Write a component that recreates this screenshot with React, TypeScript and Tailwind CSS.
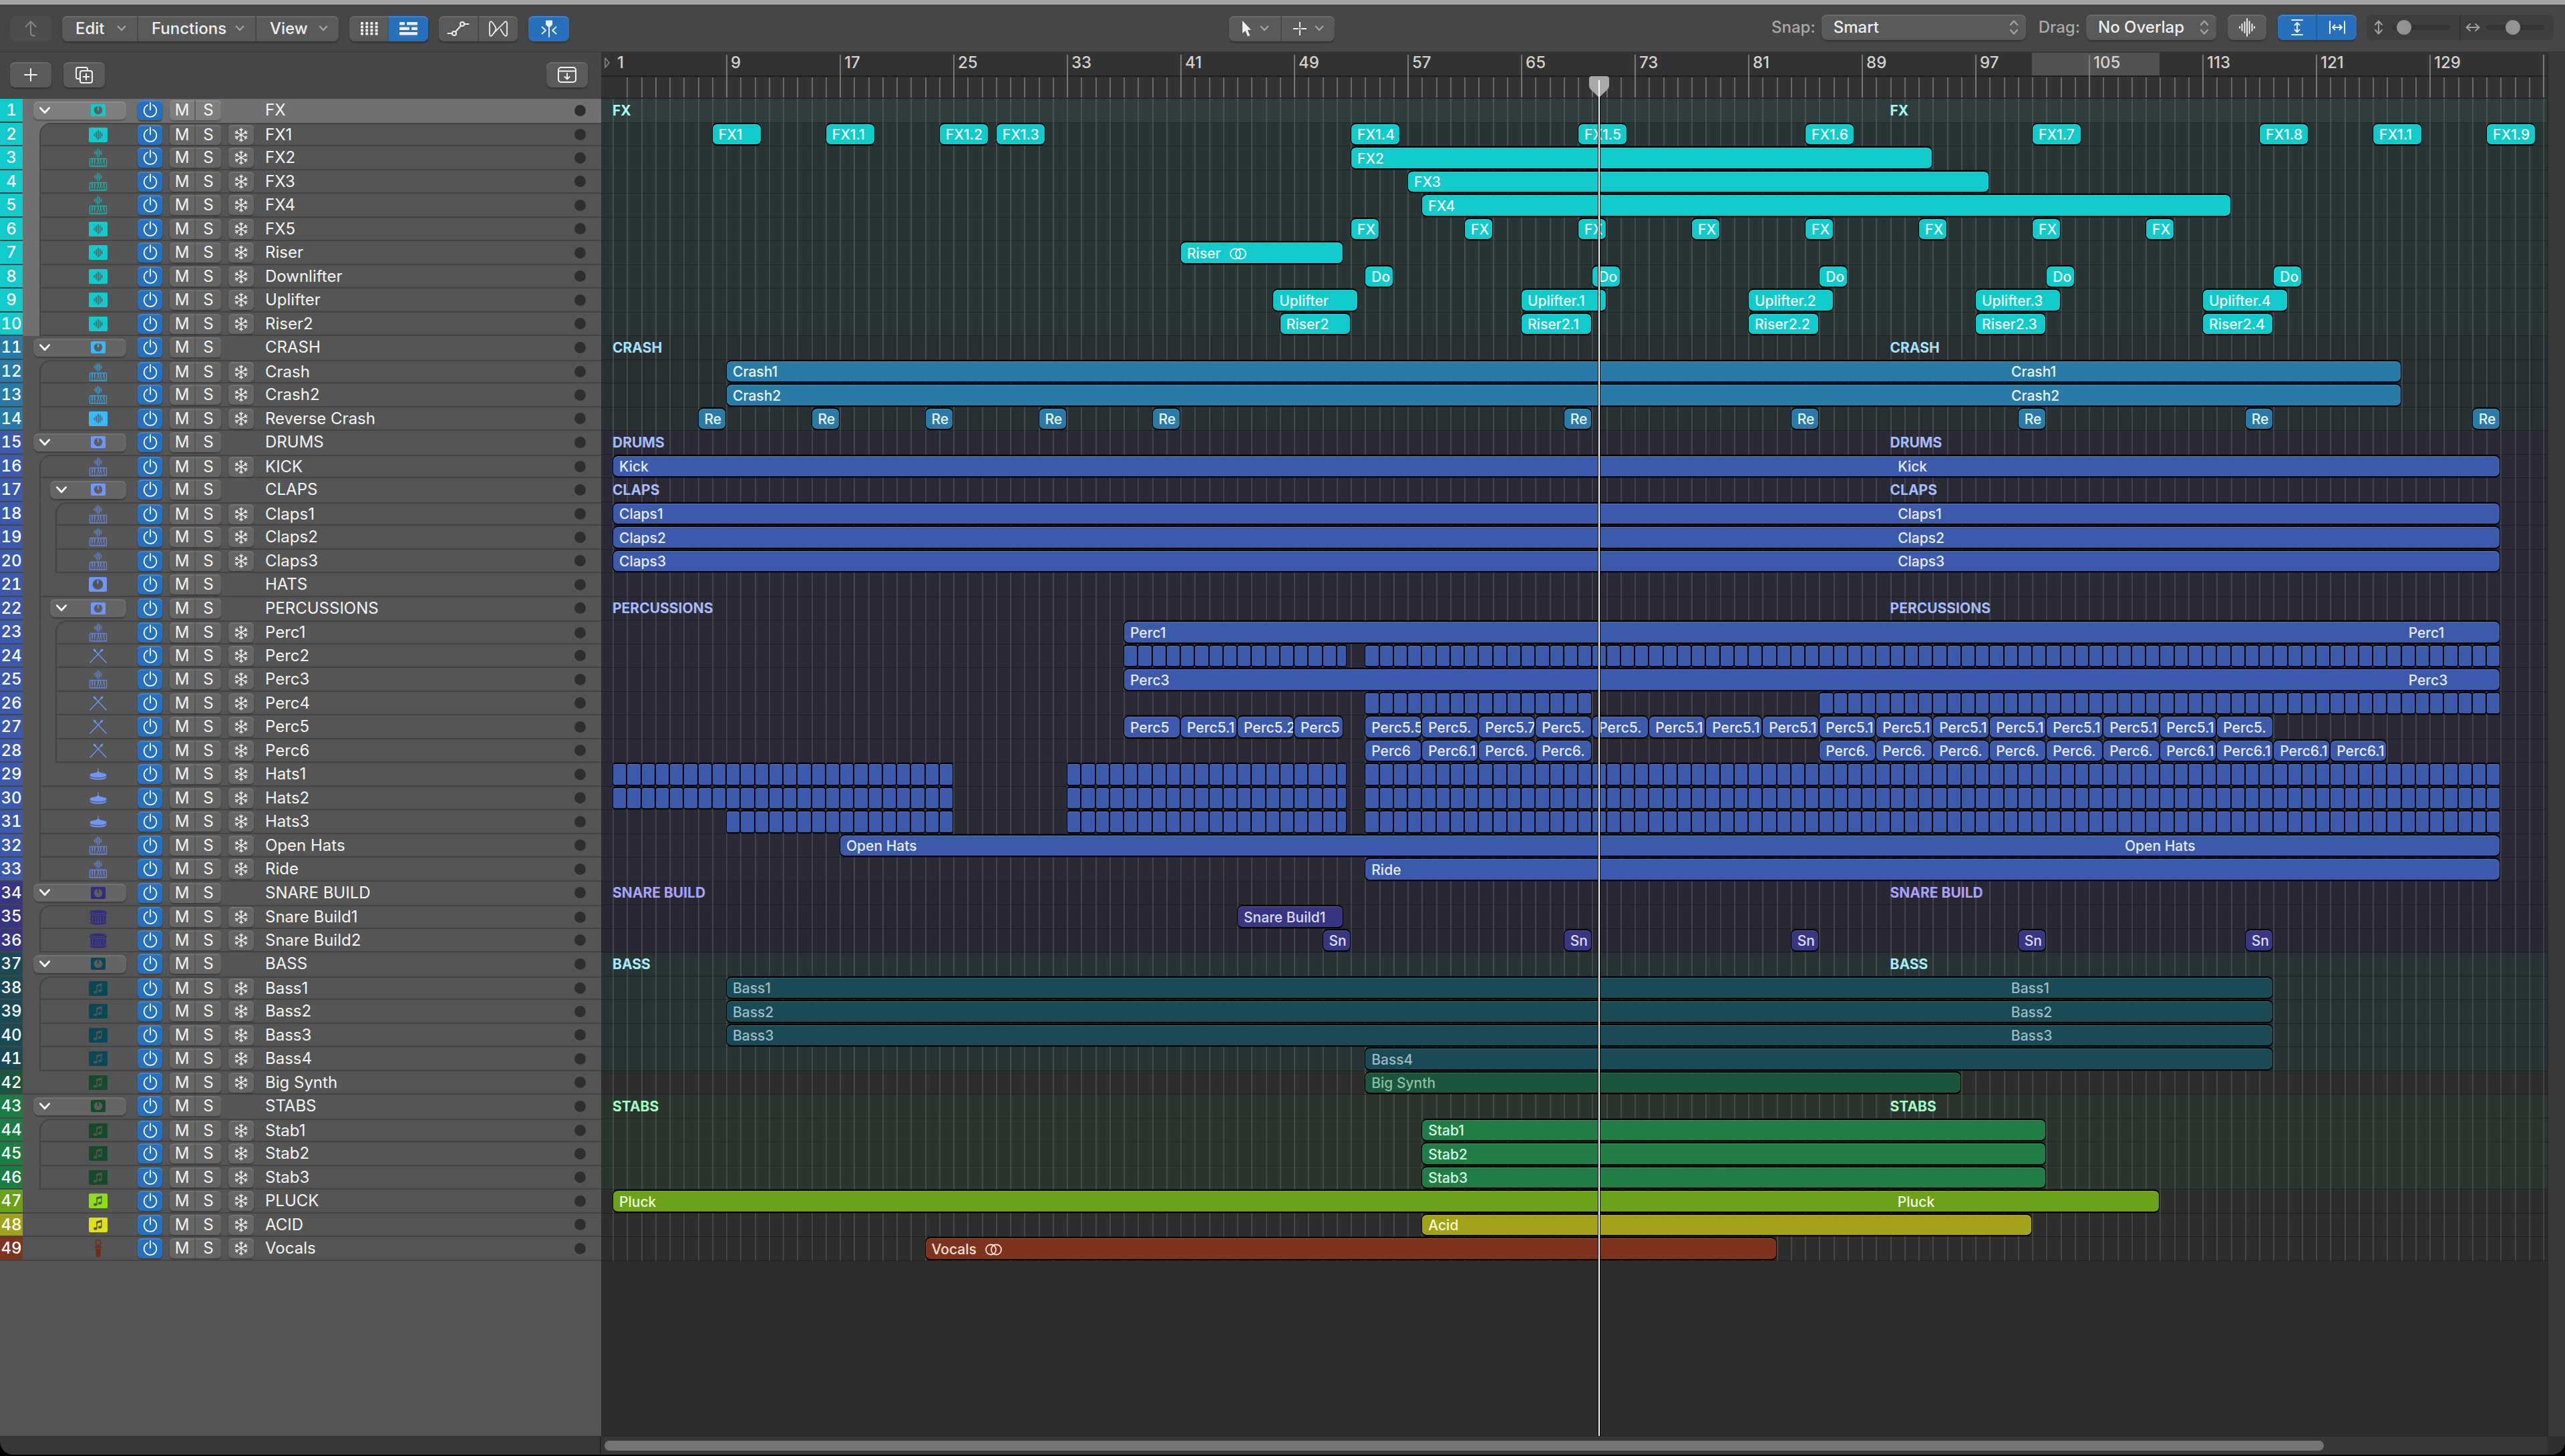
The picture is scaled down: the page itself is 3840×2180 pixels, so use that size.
import React from 'react';
import clsx from 'clsx';

type IconKind = 'folder' | 'audio' | 'sampler' | 'sticks' | 'cymbal' | 'snare' | 'note' | 'mic' | 'stack';

interface Region {
  from: number;
  to: number;
  label?: string;
  stereo?: boolean;
}

interface Group {
  number: string;
  region: string;
  text: string;
  title: string;
  icon: string;
  lane: string;
}

interface Track {
  name: string;
  icon: IconKind;
  group: keyof typeof groups;
  depth?: number;
  first?: boolean;
  regions?: Region[];
}

// Number of bars that fit between bar 1 and the right edge of the timeline
const VISIBLE_BARS = 136.28;
// Long regions and folders show their name again after this many bars
const LABEL_REPEAT = 90;

const groups = {
  fx: { number: 'bg-[#10cacb]', region: 'bg-[#10cacb]', text: 'text-[#f0ffff]', title: 'text-[#a0fdf7]', icon: 'text-[#10cacb]', lane: 'bg-[#293535]' },
  crash: { number: 'bg-[#287ba6]', region: 'bg-[#287ba6]', text: 'text-[#eef8ff]', title: 'text-[#a2e2ff]', icon: 'text-[#38baff]', lane: 'bg-[#293034]' },
  drums: { number: 'bg-[#3c5aac]', region: 'bg-[#3c5aac]', text: 'text-[#e6edff]', title: 'text-[#a5bbff]', icon: 'text-[#6f95ff]', lane: 'bg-[#292a35]' },
  snare: { number: 'bg-[#383583]', region: 'bg-[#383583]', text: 'text-[#dddcff]', title: 'text-[#a9a3ff]', icon: 'text-[#302d80]', lane: 'bg-[#292733]' },
  bass: { number: 'bg-[#1b4a57]', region: 'bg-[#1b4a57]', text: 'text-[#9dbbc6]', title: 'text-[#a4edfa]', icon: 'text-[#064758]', lane: 'bg-[#283336]' },
  synth: { number: 'bg-[#1b563c]', region: 'bg-[#1b563c]', text: 'text-[#8fbfa5]', title: 'text-[#9effc8]', icon: 'text-[#144a2e]', lane: 'bg-[#2d2d2d]' },
  stabs: { number: 'bg-[#1b7d42]', region: 'bg-[#1f7d45]', text: 'text-[#d5ffe5]', title: 'text-[#a0ffc4]', icon: 'text-[#144a28]', lane: 'bg-[#29352d]' },
  pluck: { number: 'bg-[#6ba218]', region: 'bg-[#6ba218]', text: 'text-[#f2ffe0]', title: 'text-white', icon: 'text-[#8ce012]', lane: 'bg-[#2d2d2d]' },
  acid: { number: 'bg-[#a2a118]', region: 'bg-[#a2a118]', text: 'text-[#ffffdd]', title: 'text-white', icon: 'text-[#e2e212]', lane: 'bg-[#2d2d2d]' },
  vocals: { number: 'bg-[#80331c]', region: 'bg-[#80331c]', text: 'text-[#ffe3d8]', title: 'text-white', icon: 'text-[#752a18]', lane: 'bg-[#2d2d2d]' },
} satisfies Record<string, Group>;

const long = (from: number, to: number, label: string): Region[] => [{ from, to, label }];

const series = (length: number, items: [number, string][]): Region[] =>
  items.map(([from, label]) => ({ from, to: from + length, label }));

// One region per bar, the last one is cut off when `to` is not a whole bar
const cells = (from: number, to: number): Region[] => {
  const out: Region[] = [];
  for (let bar = from; bar < to; bar++) out.push({ from: bar, to: Math.min(bar + 1, to) });
  return out;
};

const chain = (from: number, labels: string[]): Region[] =>
  labels.map((label, i) => ({ from: from + i * 4, to: from + i * 4 + 4, label }));

const hats = [...cells(1, 25), ...cells(33, 52.7), ...cells(54, 134)];

const tracks: Track[] = [
  { name: 'FX', icon: 'folder', group: 'fx' },
  {
    name: 'FX1', icon: 'audio', group: 'fx', depth: 1, first: true,
    regions: series(3.5, [[8, 'FX1'], [16, 'FX1.1'], [24, 'FX1.2'], [28, 'FX1.3'], [53, 'FX1.4'], [69, 'FX1.5'], [85, 'FX1.6'], [101, 'FX1.7'], [117, 'FX1.8'], [125, 'FX1.1'], [133, 'FX1.9']]),
  },
  { name: 'FX2', icon: 'sampler', group: 'fx', depth: 1, regions: long(53, 94, 'FX2') },
  { name: 'FX3', icon: 'sampler', group: 'fx', depth: 1, regions: long(57, 98, 'FX3') },
  { name: 'FX4', icon: 'sampler', group: 'fx', depth: 1, regions: long(58, 115, 'FX4') },
  { name: 'FX5', icon: 'audio', group: 'fx', depth: 1, regions: series(2, [[53, 'FX'], [61, 'FX'], [69, 'FX'], [77, 'FX'], [85, 'FX'], [93, 'FX'], [101, 'FX'], [109, 'FX']]) },
  { name: 'Riser', icon: 'audio', group: 'fx', depth: 1, regions: [{ from: 41, to: 52.5, label: 'Riser', stereo: true }] },
  { name: 'Downlifter', icon: 'audio', group: 'fx', depth: 1, regions: series(2, [[54, 'Do'], [70, 'Do'], [86, 'Do'], [102, 'Do'], [118, 'Do']]) },
  { name: 'Uplifter', icon: 'audio', group: 'fx', depth: 1, regions: series(6, [[47.5, 'Uplifter'], [65, 'Uplifter.1'], [81, 'Uplifter.2'], [97, 'Uplifter.3'], [113, 'Uplifter.4']]) },
  { name: 'Riser2', icon: 'audio', group: 'fx', depth: 1, regions: series(5, [[48, 'Riser2'], [65, 'Riser2.1'], [81, 'Riser2.2'], [97, 'Riser2.3'], [113, 'Riser2.4']]) },
  { name: 'CRASH', icon: 'folder', group: 'crash' },
  { name: 'Crash', icon: 'sampler', group: 'crash', depth: 1, first: true, regions: long(9, 127, 'Crash1') },
  { name: 'Crash2', icon: 'sampler', group: 'crash', depth: 1, regions: long(9, 127, 'Crash2') },
  { name: 'Reverse Crash', icon: 'audio', group: 'crash', depth: 1, regions: series(2, [[7, 'Re'], [15, 'Re'], [23, 'Re'], [31, 'Re'], [39, 'Re'], [68, 'Re'], [84, 'Re'], [100, 'Re'], [116, 'Re'], [132, 'Re']]) },
  { name: 'DRUMS', icon: 'folder', group: 'drums' },
  { name: 'KICK', icon: 'sampler', group: 'drums', depth: 1, first: true, regions: long(1, 134, 'Kick') },
  { name: 'CLAPS', icon: 'folder', group: 'drums', depth: 1 },
  { name: 'Claps1', icon: 'sampler', group: 'drums', depth: 2, first: true, regions: long(1, 134, 'Claps1') },
  { name: 'Claps2', icon: 'sampler', group: 'drums', depth: 2, regions: long(1, 134, 'Claps2') },
  { name: 'Claps3', icon: 'sampler', group: 'drums', depth: 2, regions: long(1, 134, 'Claps3') },
  { name: 'HATS', icon: 'stack', group: 'drums', depth: 1 },
  { name: 'PERCUSSIONS', icon: 'folder', group: 'drums', depth: 1 },
  { name: 'Perc1', icon: 'sampler', group: 'drums', depth: 2, first: true, regions: long(37, 134, 'Perc1') },
  { name: 'Perc2', icon: 'sticks', group: 'drums', depth: 2, regions: [...cells(37, 52.7), ...cells(54, 134)] },
  { name: 'Perc3', icon: 'sampler', group: 'drums', depth: 2, regions: long(37, 134, 'Perc3') },
  { name: 'Perc4', icon: 'sticks', group: 'drums', depth: 2, regions: [...cells(54, 70), ...cells(86, 134)] },
  {
    name: 'Perc5', icon: 'sticks', group: 'drums', depth: 2,
    regions: [
      ...chain(37, ['Perc5', 'Perc5.1', 'Perc5.2']),
      { from: 49, to: 52.5, label: 'Perc5' },
      ...chain(54, ['Perc5.5', 'Perc5.', 'Perc5.7', 'Perc5.', 'Perc5.', 'Perc5.1', 'Perc5.1', 'Perc5.1', 'Perc5.1', 'Perc5.1', 'Perc5.1', 'Perc5.1', 'Perc5.1', 'Perc5.1', 'Perc5.1', 'Perc5.']),
    ],
  },
  {
    name: 'Perc6', icon: 'sticks', group: 'drums', depth: 2,
    regions: [
      ...chain(54, ['Perc6', 'Perc6.1', 'Perc6.', 'Perc6.']),
      ...chain(86, ['Perc6.', 'Perc6.', 'Perc6.', 'Perc6.', 'Perc6.', 'Perc6.', 'Perc6.1', 'Perc6.1', 'Perc6.1', 'Perc6.1']),
    ],
  },
  { name: 'Hats1', icon: 'cymbal', group: 'drums', depth: 1, regions: hats },
  { name: 'Hats2', icon: 'cymbal', group: 'drums', depth: 1, regions: hats },
  { name: 'Hats3', icon: 'cymbal', group: 'drums', depth: 1, regions: hats.filter((r) => r.from >= 9) },
  { name: 'Open Hats', icon: 'sampler', group: 'drums', depth: 1, regions: long(17, 134, 'Open Hats') },
  { name: 'Ride', icon: 'sampler', group: 'drums', depth: 1, regions: long(54, 134, 'Ride') },
  { name: 'SNARE BUILD', icon: 'folder', group: 'snare' },
  { name: 'Snare Build1', icon: 'snare', group: 'snare', depth: 1, first: true, regions: long(45, 52.5, 'Snare Build1') },
  { name: 'Snare Build2', icon: 'snare', group: 'snare', depth: 1, regions: series(2, [[51, 'Sn'], [68, 'Sn'], [84, 'Sn'], [100, 'Sn'], [116, 'Sn']]) },
  { name: 'BASS', icon: 'folder', group: 'bass' },
  { name: 'Bass1', icon: 'note', group: 'bass', depth: 1, first: true, regions: long(9, 118, 'Bass1') },
  { name: 'Bass2', icon: 'note', group: 'bass', depth: 1, regions: long(9, 118, 'Bass2') },
  { name: 'Bass3', icon: 'note', group: 'bass', depth: 1, regions: long(9, 118, 'Bass3') },
  { name: 'Bass4', icon: 'note', group: 'bass', depth: 1, regions: long(54, 118, 'Bass4') },
  { name: 'Big Synth', icon: 'note', group: 'synth', regions: long(54, 96, 'Big Synth') },
  { name: 'STABS', icon: 'folder', group: 'stabs' },
  { name: 'Stab1', icon: 'note', group: 'stabs', depth: 1, first: true, regions: long(58, 102, 'Stab1') },
  { name: 'Stab2', icon: 'note', group: 'stabs', depth: 1, regions: long(58, 102, 'Stab2') },
  { name: 'Stab3', icon: 'note', group: 'stabs', depth: 1, regions: long(58, 102, 'Stab3') },
  { name: 'PLUCK', icon: 'note', group: 'pluck', regions: long(1, 110, 'Pluck') },
  { name: 'ACID', icon: 'note', group: 'acid', regions: long(58, 101, 'Acid') },
  { name: 'Vocals', icon: 'mic', group: 'vocals', regions: [{ from: 23, to: 83, label: 'Vocals', stereo: true }] },
];

const percent = (bars: number) => `${(bars / VISIBLE_BARS) * 100}%`;

const face = 'bg-[#5a5a5a] shadow-[inset_0_2px_0_#6b6b6b,0_2px_2px_#333333]';
const blueFace = 'bg-[#2670bd] shadow-[inset_0_2px_0_#4285c9,0_2px_2px_#333333]';

/* ---------- icons ---------- */

function Chevron({ className }: { className?: string }) {
  return (
    <svg className={clsx('shrink-0', className)} viewBox="0 0 16 10" fill="none" stroke="currentColor" strokeWidth="2.6" strokeLinecap="round" strokeLinejoin="round">
      <path d="M2 1.5 8 8 14 1.5" />
    </svg>
  );
}

function UpDown() {
  return (
    <svg className="w-4 h-6" viewBox="0 0 16 24" fill="none" stroke="currentColor" strokeWidth="2.4" strokeLinecap="round" strokeLinejoin="round">
      <path d="M3 8 8 2.5 13 8M3 16 8 21.5 13 16" />
    </svg>
  );
}

function PowerIcon() {
  return (
    <svg className="w-6 h-6" viewBox="0 0 24 24" fill="none" stroke="white" strokeWidth="1.8" strokeLinecap="round">
      <path d="M8 4.2a9.3 9.3 0 1 0 8 0M12 1v10.5" />
    </svg>
  );
}

function FreezeIcon() {
  return (
    <svg className="w-[22px] h-[22px]" viewBox="-11 -11 22 22" fill="none" stroke="white" strokeWidth="1.3" strokeLinecap="round">
      {[0, 60, 120, 180, 240, 300].map((angle) => (
        <path key={angle} transform={`rotate(${angle})`} d="M0 0V-10M-2.4 -8.6 0 -6.4 2.4 -8.6" />
      ))}
    </svg>
  );
}

function StereoIcon() {
  return (
    <svg className="w-7 h-[18px] shrink-0" viewBox="0 0 28 18" fill="none" stroke="currentColor" strokeWidth="1.8">
      <circle cx="9.5" cy="9" r="7.5" />
      <circle cx="17.5" cy="9" r="7.5" />
    </svg>
  );
}

function FolderIcon({ className }: { className?: string }) {
  return (
    <svg className={className} viewBox="0 0 22 18">
      <rect width="22" height="18" rx="2" fill="currentColor" />
      <circle cx="11" cy="9" r="6.3" fill="#5d5d5d" />
      <path d="M11 4v4.5" stroke="currentColor" strokeWidth="1.8" strokeLinecap="round" />
    </svg>
  );
}

function TrackIcon({ kind }: { kind: IconKind }) {
  return (
    <svg className="w-7 h-7" viewBox="0 0 28 28" fill="none" stroke="currentColor">
      {kind === 'audio' && (
        <>
          <rect y="3" width="28" height="22" rx="2" fill="currentColor" stroke="none" />
          <path d="M8.5 12.5v3M11.2 10v8M14 7.5v13M16.8 9v10M19.5 12v4" stroke="#555" strokeWidth="1.5" strokeLinecap="round" />
        </>
      )}
      {kind === 'stack' && (
        <>
          <rect y="3" width="27" height="22" rx="2" fill="currentColor" stroke="none" />
          <circle cx="13.5" cy="14" r="7.8" fill="#555" stroke="none" />
          <path d="M13.5 7.5v5.5" strokeWidth="2" />
        </>
      )}
      {kind === 'note' && (
        <>
          <rect y="3" width="28" height="22" rx="2" fill="currentColor" stroke="none" />
          <g stroke="#555" strokeWidth="1.4" fill="#555">
            <ellipse cx="9.8" cy="19.5" rx="2" ry="1.4" />
            <ellipse cx="16.6" cy="17.5" rx="2" ry="1.4" />
            <path d="M12 19.5V9.5M18.8 17.5V7.5" fill="none" />
            <path d="M12 11 18.8 9V7.3L12 9.3Z" />
          </g>
        </>
      )}
      {kind === 'sampler' && (
        <g opacity="0.75">
          <path d="M8.5 5.5v2.5M11 3.5v7M13.5 1v12M16 2.5v9M18.5 5v4" strokeWidth="1.4" strokeLinecap="round" />
          <rect x="1.5" y="15.5" width="25" height="11.5" rx="1" strokeWidth="1.4" />
          <path d="M5 22v5M8.7 22v5M12.3 22v5M16 22v5M19.7 22v5M23.3 22v5" strokeWidth="1" />
          <path d="M5 16v6.500M8.700 16v6.500M14 16v6.500M17.700 16v6.500M22.500 16v6.500" strokeWidth="1.8" />
        </g>
      )}
      {kind === 'sticks' && (
        <g strokeLinecap="round">
          <path d="M8 5 26 24M20 5 2 24" strokeWidth="1.4" />
          <path d="M8 5 9.500 6.500M20 5 18.500 6.500" strokeWidth="2.8" />
        </g>
      )}
      {kind === 'cymbal' && (
        <g fill="currentColor" stroke="none">
          <path d="M14.5 5v4.5c1.5 2.500 4 2.500 7 3 3.500.6 5 1.500 5 3.200 0 2.300-5.500 3.500-12.500 3.500S1.500 18 1.500 15.700c0-1.700 1.500-2.600 5-3.200 3-.5 5.500-.5 7-3V5Z" />
          <path d="M1.500 17.700c2 2 7 2.700 12.500 2.700s10.500-.7 12.500-2.700c0 3.300-5 4.800-12.500 4.800S1.500 21 1.500 17.700Z" />
        </g>
      )}
      {kind === 'snare' && (
        <g>
          <path d="M1 6h26v3l-1.500 1v11l1 1.500C25 25 20 25.500 14 25.500S3 25 1.500 22.500l1-1.500V10L1 9Z" fill="currentColor" stroke="none" />
          <ellipse cx="14" cy="6" rx="13" ry="2.800" fill="currentColor" stroke="#555" strokeWidth="0.8" />
          <path d="M1.500 9.800c4 2.200 21 2.200 25 0M2 20.500c4 2.200 20 2.200 24 0M5.500 12v7.500M10.500 13v8M14 13v8M17.500 13v8M22.500 12v7.500" stroke="#555" strokeWidth="0.900" />
        </g>
      )}
      {kind === 'mic' && (
        <g>
          <rect x="10.500" y="1.500" width="7" height="8" rx="3" strokeWidth="1.400" />
          <path d="M9.500 10.500h9v3h-9ZM10 14.500h8l-.8 11-1 2h-4.400l-1-2Z" fill="currentColor" stroke="none" />
        </g>
      )}
    </svg>
  );
}

function ToolbarIcon({ children }: { children: React.ReactNode }) {
  return (
    <svg className="w-7 h-7" viewBox="0 0 28 28" fill="none" stroke="currentColor" strokeWidth="2" strokeLinecap="round" strokeLinejoin="round">
      {children}
    </svg>
  );
}

/* ---------- toolbar ---------- */

function IconButton({ label, className, children }: { label: string; className?: string; children: React.ReactNode }) {
  return (
    <button type="button" aria-label={label} className={clsx('h-[38px] flex items-center justify-center', className)}>
      {children}
    </button>
  );
}

function MenuButton({ label, className }: { label: string; className: string }) {
  return (
    <button type="button" className={clsx('h-[38px] flex items-center justify-between pl-5 pr-4 border-[#474747]', className)}>
      {label}
      <Chevron className="w-[14px] h-[9px] text-[#a2a2a2]" />
    </button>
  );
}

function SelectBox({ id, label, value, options, className }: { id: string; label: string; value: string; options: string[]; className: string }) {
  return (
    <div className="flex items-center gap-[9px]">
      <label htmlFor={id} className="text-[#a9a9a9]">{label}</label>
      <div className={clsx('relative h-[38px] rounded-lg', face, className)}>
        <select id={id} defaultValue={value} className="w-full h-full pl-[18px] pr-8 appearance-none bg-transparent text-[#eeeeee] font-medium focus:outline-none">
          {options.map((option) => (
            <option key={option}>{option}</option>
          ))}
        </select>
        <span className="absolute right-[10px] inset-y-0 flex items-center pointer-events-none text-[#a2a2a2]">
          <UpDown />
        </span>
      </div>
    </div>
  );
}

function ZoomSlider({ label, value, children }: { label: string; value: number; children: React.ReactNode }) {
  return (
    <div className="flex items-center gap-[8px] flex-1 pl-[6px] pr-[14px] text-[#a2a2a2]">
      {children}
      <input
        type="range"
        aria-label={label}
        defaultValue={value}
        className="w-0 flex-1 h-2 rounded-full bg-[#343434] appearance-none [&::-webkit-slider-thumb]:appearance-none [&::-webkit-slider-thumb]:w-[22px] [&::-webkit-slider-thumb]:h-[22px] [&::-webkit-slider-thumb]:rounded-full [&::-webkit-slider-thumb]:bg-[#939393]"
      />
    </div>
  );
}

function Toolbar() {
  return (
    <header className="grid grid-cols-[1fr_auto_1fr] items-center h-[71px] pl-[15px] pr-[17px] bg-[#464646] border-t border-b border-t-[#3a3a3a] border-b-[#383838] text-2xl font-medium text-[#eeeeee]">
      <div className="flex items-center gap-4">
        <IconButton label="Up" className="w-[62px] rounded-lg bg-[#4d4d4d] text-[#858585]">
          <ToolbarIcon><path d="M14 3v17.500c0 3 2 4 6 4M6.500 11 14 3l7.500 8" /></ToolbarIcon>
        </IconButton>
        <div className={clsx('flex rounded-lg', face)}>
          <MenuButton label="Edit" className="w-[112px]" />
          <MenuButton label="Functions" className="w-[179px] border-x-2" />
          <MenuButton label="View" className="w-[123px]" />
        </div>
        <div className={clsx('flex rounded-lg', face)}>
          <IconButton label="Live Loops" className="w-[59px]">
            <svg className="w-[28px] h-[20px]" viewBox="0 0 28 20" fill="currentColor">
              {[0, 1, 2, 3].flatMap((row) => [0, 1, 2, 3].map((col) => (
                <rect key={`${row}-${col}`} x={1 + col * 7.2} y={row * 5.2} width="4" height="4" rx="1" />
              )))}
            </svg>
          </IconButton>
          <IconButton label="Tracks" className={clsx('w-[59px] rounded-r-lg', blueFace)}>
            <svg className="w-[27px] h-5" viewBox="0 0 27 20" fill="currentColor">
              <rect y="0" width="8" height="4.500" rx="1" />
              <rect x="11" y="0" width="16" height="4.500" rx="1" />
              <rect y="7.500" width="15" height="4.500" rx="1" />
              <rect x="18" y="7.500" width="9" height="4.500" rx="1" />
              <rect y="15" width="27" height="4.500" rx="1" />
            </svg>
          </IconButton>
        </div>
        <div className={clsx('flex rounded-lg', face)}>
          <IconButton label="Automation" className="w-[60px] border-r-2 border-[#474747]">
            <svg className="w-9 h-7" viewBox="0 0 36 28" fill="none" stroke="currentColor" strokeWidth="2" strokeLinecap="round">
              <circle cx="12" cy="21" r="3" />
              <circle cx="24" cy="7" r="3" />
              <path d="M2.500 21H9M14 18.500l8-9M27 7h6.500" />
            </svg>
          </IconButton>
          <IconButton label="Flex" className="w-[58px]">
            <svg className="w-8 h-7" viewBox="0 0 32 28" fill="none" stroke="currentColor" strokeWidth="1.800" strokeLinejoin="round">
              <path d="M3 5.500C3 3 5.500 2.500 7 4.500 11 10 12.500 11.500 12.500 14S11 18 7 23.500C5.500 25.500 3 25 3 22.500ZM29 5.500C29 3 26.500 2.500 25 4.500 17 14 14 14 7 23.500M29 5.500v17c0 2.500-2.500 3-4 1C21 18 19.500 16.500 19.500 14" />
            </svg>
          </IconButton>
        </div>
        <IconButton label="Catch Playhead" className={clsx('w-[61px] rounded-lg', blueFace)}>
          <ToolbarIcon>
            <path d="M10 2.500h8v5l-3 3h-2l-3-3Z" fill="currentColor" />
            <path d="M14 9v17M3.500 11.500 9 16.500l-5.500 5M24.500 11.500 19 16.500l5.500 5" />
          </ToolbarIcon>
        </IconButton>
      </div>

      <div className={clsx('flex rounded-lg', face)}>
        <IconButton label="Left-click Tool" className="w-[79px] gap-3 border-r-2 border-[#474747]">
          <svg className="w-4 h-6" viewBox="0 0 16 24" fill="currentColor">
            <path d="M2 0v19l4.300-4 3.700 8.500 3.200-1.500-3.500-8.200H15Z" />
          </svg>
          <Chevron className="w-[14px] h-[9px] text-[#a2a2a2]" />
        </IconButton>
        <IconButton label="Command-click Tool" className="w-[79px] gap-3">
          <svg className="w-5 h-5" viewBox="0 0 20 20" fill="none" stroke="currentColor" strokeWidth="2">
            <path d="M10 0v8M10 12v8M0 10h8M12 10h8M9 10h2" />
          </svg>
          <Chevron className="w-[14px] h-[9px] text-[#a2a2a2]" />
        </IconButton>
      </div>

      <div className="flex items-center justify-end pb-1">
        <SelectBox id="snap" label="Snap:" value="Smart" options={['Smart', 'Bar', 'Beat', 'Division']} className="w-[306px]" />
        <div className="w-[19px]" />
        <SelectBox id="drag" label="Drag:" value="No Overlap" options={['No Overlap', 'Overlap', 'X-Fade']} className="w-[195px]" />
        <IconButton label="Waveform Zoom" className={clsx('w-[58px] ml-[17px] rounded-lg', face)}>
          <ToolbarIcon><path d="M3 13v2M6.500 9v10M10.500 6v16M14 1v26M17.500 5v18M21.500 9v10M25 13v2" /></ToolbarIcon>
        </IconButton>
        <div className={clsx('flex ml-[17px] rounded-lg', blueFace)}>
          <IconButton label="Fit Vertically" className="w-[59px] border-r-2 border-[#1f5f9f]">
            <ToolbarIcon><path d="M6 3h16M6 25h16M14 7.500v13M10.500 10.500 14 7l3.500 3.500M10.500 17.500 14 21l3.500-3.500" /></ToolbarIcon>
          </IconButton>
          <IconButton label="Fit Horizontally" className="w-[59px]">
            <ToolbarIcon><path d="M3 5v18M25 5v18M7.500 14h13M10.500 10.500 7 14l3.500 3.500M17.500 10.500 21 14l-3.500 3.500" /></ToolbarIcon>
          </IconButton>
        </div>
        <div className="flex w-[280px] h-[38px] ml-[15px] rounded-lg bg-[#3e3e3e]">
          <ZoomSlider label="Vertical Zoom" value={11}>
            <svg className="w-6 h-6" viewBox="0 0 24 24" fill="none" stroke="currentColor" strokeWidth="2" strokeLinecap="round" strokeLinejoin="round">
              <path d="M12 3v18M7 8l5-5.500L17 8M7 16l5 5.500 5-5.500" />
            </svg>
          </ZoomSlider>
          <div className="w-0.5 bg-[#323232]" />
          <ZoomSlider label="Horizontal Zoom" value={44}>
            <svg className="w-6 h-6" viewBox="0 0 24 24" fill="none" stroke="currentColor" strokeWidth="2" strokeLinecap="round" strokeLinejoin="round">
              <path d="M3 12h18M8 7l-5.500 5L8 17M16 7l5.500 5-5.500 5" />
            </svg>
          </ZoomSlider>
        </div>
      </div>
    </header>
  );
}

/* ---------- track headers ---------- */

function TrackHeader({ track, index }: { track: Track; index: number }) {
  const { depth = 0, first, icon, name } = track;
  const group = groups[track.group];
  const isFolder = icon === 'folder';
  const selected = index === 0;
  const inSelected = index > 0 && index < 10;
  const button = selected ? 'bg-[#7e7e7e] shadow-[inset_0_2px_0_#8c8c8c,0_2px_2px_#555555]' : 'bg-[#656565] shadow-[inset_0_2px_0_#737373,0_2px_2px_#3d3d3d]';

  return (
    <li className="flex odd:h-9 even:h-[35px]">
      <div className={clsx('w-[34px] flex items-center justify-center border-b-2 border-[#444444] text-white font-medium tabular-nums', group.number)}>
        {index + 1}
      </div>
      {depth > 0 && <div className={clsx('w-[25px]', inSelected ? 'bg-[#707070]' : 'bg-[#555555]')} />}
      {depth > 1 && <div className="w-6 border-l-2 border-[#444444]" />}
      <div className={clsx('flex-1 flex', inSelected && 'bg-[#707070]')}>
        <div
          className={clsx(
            'flex-1 flex items-center pr-[23px] border-b-2 border-[#444444]',
            isFolder && 'border-b-transparent',
            depth > 0 && 'border-l-2',
            first && 'border-t-2 rounded-tl-[17px]',
            selected ? 'bg-[#707070]' : 'bg-[#555555]',
          )}
        >
          <div className={clsx('flex items-center h-full', depth === 0 && 'w-[172px]', depth === 1 && 'w-[145px]', depth === 2 && 'w-[121px]')}>
            {isFolder ? (
              <button type="button" aria-label={`Collapse ${name}`} className={clsx('flex-1 flex items-center justify-between h-[27px] mr-[17px] pl-2 pr-[31px] rounded-lg', depth > 0 ? 'ml-[14px]' : 'ml-4', button)}>
                <Chevron className="w-[18px] h-[11px] text-white" />
                <span className={group.icon}><FolderIcon className="w-[22px] h-[18px]" /></span>
              </button>
            ) : (
              <span className={clsx('ml-auto mr-[45px]', group.icon)}><TrackIcon kind={icon} /></span>
            )}
          </div>
          <button type="button" aria-label={`${name} power`} className="w-[37px] h-[30px] mr-[11px] flex items-center justify-center rounded-md bg-[#2670bd] shadow-[inset_0_2px_0_#4285c9,0_2px_2px_#3d3d3d]">
            <PowerIcon />
          </button>
          <div className={clsx('flex mr-[11px] rounded-md', button)}>
            <button type="button" aria-label={`Mute ${name}`} className="w-[39px] h-[30px] border-r-2 border-[#4d4d4d]/60 leading-[30px]">M</button>
            <button type="button" aria-label={`Solo ${name}`} className="w-[38px] h-[30px] leading-[30px]">S</button>
          </div>
          <div className="w-[38px] mr-[17px]">
            {!isFolder && icon !== 'stack' && (
              <button type="button" aria-label={`Freeze ${name}`} className={clsx('w-[38px] h-[30px] flex items-center justify-center rounded-md', button)}>
                <FreezeIcon />
              </button>
            )}
          </div>
          <span className="leading-8">{name}</span>
          <span className="ml-auto w-[17px] h-[17px] rounded-full bg-[#2e2e2e]" />
        </div>
      </div>
    </li>
  );
}

function HeaderPanel() {
  return (
    <aside className="w-[900px] shrink-0 flex flex-col bg-[#555555] text-2xl text-[#f4f4f4]">
      <div className="h-[70px] flex items-center gap-[18px] pl-[15px] pr-5 pb-0.5 bg-[#464646]">
        <IconButton label="Add Track" className={clsx('w-[62px] rounded-lg', face)}>
          <svg className="w-5 h-5" viewBox="0 0 20 20" fill="none" stroke="currentColor" strokeWidth="2" strokeLinecap="round"><path d="M10 1v18M1 10h18" /></svg>
        </IconButton>
        <IconButton label="Duplicate Track" className={clsx('w-[62px] rounded-lg', face)}>
          <ToolbarIcon>
            <path d="M7 20H4.500C3 20 2 19 2 17.500v-12C2 4 3 3 4.500 3h12C18 3 19 4 19 5.500V7" />
            <rect x="8" y="8" width="18" height="18" rx="3" />
            <path d="M17 12.500v9M12.500 17h9" />
          </ToolbarIcon>
        </IconButton>
        <IconButton label="Global Tracks" className={clsx('w-[62px] ml-auto rounded-lg', face)}>
          <ToolbarIcon>
            <rect x="1" y="3" width="26" height="22" rx="4" />
            <path d="M2 8.500h24M14 12v8M10.500 17l3.500 3.500 3.500-3.500" />
          </ToolbarIcon>
        </IconButton>
      </div>
      <ol>
        {tracks.map((track, i) => (
          <TrackHeader key={i} track={track} index={i} />
        ))}
      </ol>
    </aside>
  );
}

/* ---------- timeline ---------- */

function Ruler() {
  const bars = Array.from({ length: 137 }, (_, i) => i + 1);
  return (
    <div className="h-[70px] pl-[17px] bg-[#333333] border-b-2 border-[#272727]">
      <div className="relative h-full">
        <div className="absolute top-px h-[34px] bg-[#535353]" style={{ left: percent(100), width: percent(9) }} />
        <div className="absolute -left-[17px] right-0 top-[35px] h-0.5 bg-[#1e1e1e]" />
        <svg className="absolute -left-[12px] top-2 w-2 h-4" viewBox="0 0 8 16" fill="none" stroke="#8a8a8a" strokeWidth="1.500"><path d="M1 1v14l6-7Z" /></svg>
        {bars.map((bar) =>
          bar % 8 === 1 ? (
            <div
              key={bar}
              className={clsx('absolute top-1 bottom-0 border-l-2 pl-[5px] text-2xl leading-6 text-[#d2d2d2]', bar === 1 ? 'border-transparent' : 'border-[#777777]')}
              style={{ left: percent(bar - 1) }}
            >
              {bar < 137 && bar}
            </div>
          ) : (
            <div key={bar} className="absolute top-[38px] bottom-0 w-0.5 bg-[#6a6a6a]" style={{ left: percent(bar - 1) }} />
          ),
        )}
      </div>
    </div>
  );
}

function RegionBlock({ region, group }: { region: Region; group: Group }) {
  const { from, to, label, stereo } = region;
  const length = to - from;
  return (
    <div
      className={clsx(
        'absolute inset-y-0 z-20 overflow-hidden border-x border-y-2 border-black shadow-[inset_0_1px_0_rgba(255,255,255,0.15)]',
        label ? 'rounded-lg' : 'rounded-sm',
        group.region,
        group.text,
      )}
      style={{ left: percent(from - 1), width: percent(length) }}
    >
      {label && (
        <span className="flex items-center gap-3 h-full pl-[9px] pt-0.5 whitespace-nowrap">
          {label}
          {stereo && <StereoIcon />}
        </span>
      )}
      {label && length > LABEL_REPEAT && (
        <span className="absolute inset-y-0 flex items-center pl-3 pt-0.5" style={{ left: `${(LABEL_REPEAT / length) * 100}%` }}>
          {label}
        </span>
      )}
    </div>
  );
}

function Lane({ track, index }: { track: Track; index: number }) {
  const group = groups[track.group];
  return (
    <li className={clsx('odd:h-9 even:h-[35px] pl-[17px] border-b border-black/30', index === 0 ? 'bg-[#303d3d]' : group.lane)}>
      <div className="relative h-full">
        {track.icon === 'folder' && [1, 1 + LABEL_REPEAT].map((bar) => (
          <span key={bar} className={clsx('absolute inset-y-0 z-20 flex items-center whitespace-nowrap font-bold', group.title)} style={{ left: percent(bar - 1) }}>
            {track.name}
          </span>
        ))}
        {track.regions?.map((region, i) => <RegionBlock key={i} region={region} group={group} />)}
      </div>
    </li>
  );
}

function Timeline() {
  const bars = Array.from({ length: 137 }, (_, i) => i);
  return (
    <section className="relative flex-1 min-w-0 flex flex-col bg-[#2c2c2c] text-[21px] leading-7 font-medium">
      <Ruler />
      <div className="relative">
        <div className="absolute inset-0 pl-[17px] pointer-events-none">
          <div className="relative h-full">
            {bars.map((bar) => (
              <div key={bar} className="absolute inset-y-0 z-10 w-0.5 bg-white/12" style={{ left: percent(bar) }} />
            ))}
          </div>
        </div>
        <ol>
          {tracks.map((track, i) => (
            <Lane key={i} track={track} index={i} />
          ))}
        </ol>
      </div>
      {/* playhead */}
      <div className="absolute inset-0 z-30 pl-[17px] pointer-events-none">
        <div className="relative h-full">
          <div className="absolute top-[52px] bottom-0 w-1 -ml-0.5 bg-white border-x border-black" style={{ left: percent(69.5) }} />
          <svg className="absolute top-9 -ml-[15px] w-[30px] h-8" viewBox="0 0 30 32" style={{ left: percent(69.5) }}>
            <path d="M4 0h22c2.500 0 4 1.500 4 4v10c0 2-1 4-2 5.500L15 32 2 19.500C1 18 0 16 0 14V4c0-2.500 1.500-4 4-4Z" fill="#a9a9a9" />
            <path d="M15 6v26" stroke="white" strokeWidth="2" />
          </svg>
        </div>
      </div>
    </section>
  );
}

export default function App() {
  return (
    <div className="min-h-screen flex flex-col pb-0.5 bg-black font-['Inter','Liberation_Sans',sans-serif] select-none">
      <div className="flex-1 flex flex-col overflow-hidden rounded-b-[20px] bg-[#373737]">
        <div className="h-[7px] bg-[#a4a4a4]" />
        <Toolbar />
        <main className="flex-1 flex">
          <HeaderPanel />
          <Timeline />
          <div className="w-[27px] bg-[#393939] border-l-2 border-[#2a2a2a]" />
        </main>
        <footer className="flex h-7 border-t border-[#2c2c2c]">
          <div className="w-[900px] shrink-0 border-r-2 border-[#262626]" />
          <div className="flex-1 flex items-center pl-[5px]">
            <div className="w-[88.5%] h-[15px] rounded-full bg-[#747474]" />
          </div>
          <div className="w-[27px] bg-[#2f2f2f]" />
        </footer>
      </div>
    </div>
  );
}
